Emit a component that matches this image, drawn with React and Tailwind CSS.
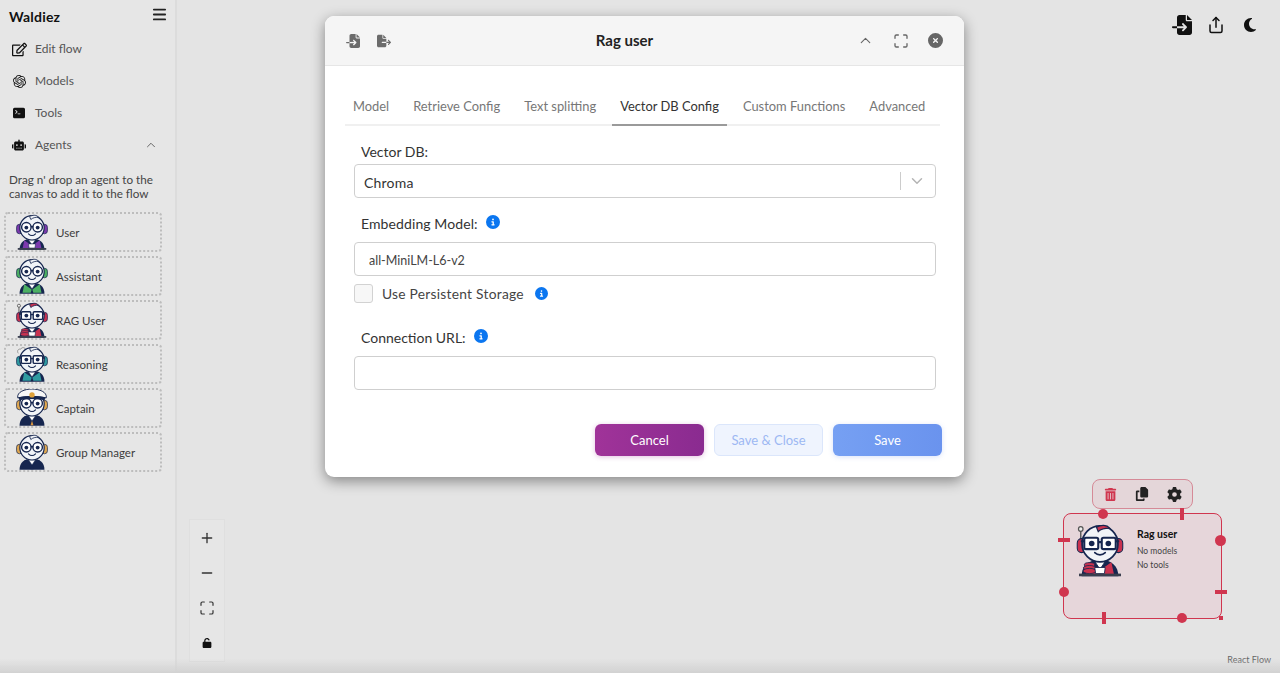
import React from "react";
import { FaRobot, FaFileImport, FaFileExport, FaMoon, FaTrashCan, FaGear, FaUnlock, FaCircleInfo, FaCircleXmark, FaCopy } from "react-icons/fa6";
import { FaRegEdit } from "react-icons/fa";
import { SiOpenai } from "react-icons/si";
import { BsTerminalFill } from "react-icons/bs";
import { FiShare } from "react-icons/fi";
import { ChevronUp, ChevronDown, Menu, Plus, Minus, Maximize } from "lucide-react";

function Robot({ accent = "#7c3aad", ear = accent, square = false, antenna = false, hat = false, steam = false, desk = false, books = false, className = "w-[34px] h-[38px] -my-[2px]" }) {
  return (
    <svg viewBox="3 0 54 64" className={className}>
      {antenna && <path d="M8 26V10" stroke="#555" strokeWidth="1.6" />}
      {antenna && <circle cx="8" cy="8" r="2.6" fill="#eee" stroke="#555" strokeWidth="1.4" />}
      {steam && <path d="M7 14c-3-4 0-8 4-7 2-4 8-3 8 1 3 1 2 6-1 7" fill="#eee" stroke="#777" strokeWidth="1.2" />}
      <path d="M9 62c0-12 8-19 21-19s21 7 21 19z" fill="#16264f" />
      <path d="M17 46l13 9 13-9 3 14H14z" fill={accent} />
      <path d="M24 45l6 9 6-9z" fill="#fff" stroke="#16264f" strokeWidth="1" />
      <path d="M30 53l-2.5 8h5z" fill={hat ? "#d9953f" : "#16264f"} />
      {books && (
        <g fill={accent} stroke="#16264f" strokeWidth="0.9">
          <ellipse cx="18" cy="49" rx="6" ry="2.6" />
          <ellipse cx="18" cy="52.5" rx="7" ry="2.8" />
          <ellipse cx="18" cy="56" rx="7.5" ry="3" />
        </g>
      )}
      {desk && <path d="M24 52h12l-1 7H25z" fill="#fff" stroke="#16264f" strokeWidth="1" />}
      {desk && <rect x="6" y="59" width="48" height="3" fill="#3a3f4f" />}
      <rect x="4" y="19" width="10" height="16" rx="5" fill={ear} stroke="#16264f" strokeWidth="1.2" />
      <rect x="46" y="19" width="10" height="16" rx="5" fill={ear} stroke="#16264f" strokeWidth="1.2" />
      <circle cx="30" cy="25" r="20.5" fill="#f1f4f8" stroke="#16264f" strokeWidth="2" />
      <path d="M26 6c5-3 12-3 15 1-5 0-10 1-13 4z" fill={books ? accent : "#f1f4f8"} stroke="#16264f" strokeWidth="1.4" />
      {square ? (
        <g fill="#fff" stroke="#16264f" strokeWidth="2.4">
          <rect x="12" y="18" width="16" height="13" rx="2" />
          <rect x="32" y="18" width="16" height="13" rx="2" />
          <path d="M28 23h4M8 22h4M48 22h4" />
        </g>
      ) : (
        <g fill="#fff" stroke="#16264f" strokeWidth="2.4">
          <circle cx="20.5" cy="24" r="8" />
          <circle cx="39.5" cy="24" r="8" />
          <path d="M28 23h4" />
        </g>
      )}
      <circle cx="20.5" cy="24.5" r="3.2" fill="#16264f" />
      <circle cx="39.5" cy="24.5" r="3.2" fill="#16264f" />
      <path d="M24 35c3.5 3.4 8.5 3.4 12 0" fill="none" stroke="#16264f" strokeWidth="1.9" strokeLinecap="round" />
      {hat && (
        <g>
          <path d="M6 15C4 5 18 0 30 0s26 5 24 15c-13-3-35-3-48 0z" fill="#f7f7f7" stroke="#16264f" strokeWidth="1.6" />
          <path d="M7 14c13-3 33-3 46 0l-2 5c-12-3-30-3-42 0z" fill="#16264f" />
          <circle cx="30" cy="10" r="4.5" fill="#e0a23a" />
        </g>
      )}
    </svg>
  );
}

const agents = [
  { name: "User", props: { accent: "#7c3aad", desk: true } },
  { name: "Assistant", props: { accent: "#4caf63" } },
  { name: "RAG User", props: { accent: "#c9324f", square: true, antenna: true, desk: true, books: true } },
  { name: "Reasoning", props: { accent: "#2e9aa0", square: true, steam: true } },
  { name: "Captain", props: { accent: "#16264f", ear: "#e0a850", hat: true } },
  { name: "Group Manager", props: { accent: "#16264f", ear: "#e0a850" } },
];

function NavItem({ icon, label, right }) {
  return (
    <div className="h-[32px] flex items-center pl-[12px] pr-[17px] text-[#555] text-[12px]">
      <span className="w-[23px] flex text-[#111]">{icon}</span>
      <span>{label}</span>
      {right && <span className="ml-auto">{right}</span>}
    </div>
  );
}

function Info({ size = "text-[14px]" }) {
  return <FaCircleInfo className={`${size} text-[#0b76f0]`} />;
}

const tabs = ["Model", "Retrieve Config", "Text splitting", "Vector DB Config", "Custom Functions", "Advanced"];

function Handle({ className }) {
  return <div className={`absolute bg-[#d0364f] ${className}`} />;
}

export default function App() {
  return (
    <div className="h-screen overflow-hidden flex bg-[#e4e4e4] font-['Lato','Noto_Sans',sans-serif]">
      <aside className="w-[177px] shrink-0 border-r-[2px] border-[#dcdcdc] bg-[#e6e6e6] flex flex-col">
        <div className="h-[33px] pl-[9px] pr-[7px] flex items-center justify-between">
          <span className="text-[14px] font-bold text-[#111] tracking-[0.2px]">Waldiez</span>
          <Menu strokeWidth={2.5} className="w-[17px] h-[17px] -mt-[4px] text-[#222]" />
        </div>
        <NavItem icon={<FaRegEdit className="text-[15px]" />} label="Edit flow" />
        <NavItem icon={<SiOpenai className="text-[13px] ml-[1px]" />} label="Models" />
        <NavItem icon={<BsTerminalFill className="text-[12px] ml-[1px]" />} label="Tools" />
        <NavItem icon={<FaRobot className="text-[14px]" />} label="Agents" right={<ChevronUp strokeWidth={1.5} className="w-[14px] h-[14px] text-[#555]" />} />
        <p className="pl-[9px] pr-[12px] mt-[11px] text-[11.7px] leading-[14px] text-[#444]">Drag n' drop an agent to the canvas to add it to the flow</p>
        <div className="mt-[12px] ml-[4px] w-[158px] flex flex-col gap-[4px]">
          {agents.map((a) => (
            <div key={a.name} className="h-[40px] rounded-[4px] border-[2px] border-dotted border-[#bdbdbd] flex items-center pl-[9px] gap-[7px] text-[11.5px] text-[#3d3d3d]">
              <Robot {...a.props} />
              <span className="pt-[2px]">{a.name}</span>
            </div>
          ))}
        </div>
      </aside>

      <main className="flex-1 relative">
        <div className="flex justify-end items-center pt-[15px] pr-[22px] text-[#111]">
          <FaFileImport className="text-[20px]" />
          <FiShare className="text-[18px] ml-[15px]" />
          <FaMoon className="text-[16px] ml-[17px]" />
        </div>

        {/* Modal */}
        <div className="absolute left-[148px] top-[16px] w-[639px] h-[461px] rounded-[9px] bg-white flex flex-col overflow-hidden shadow-[0_4px_14px_rgba(0,0,0,0.42)]">
          <header className="h-[50px] shrink-0 bg-[#f5f5f5] border-b border-[#e6e6e6] flex items-center pl-[21px] pr-[21px] relative">
            <div className="flex items-center gap-[17px] text-[#6b6b6b]">
              <FaFileImport className="text-[14px]" />
              <FaFileExport className="text-[14px]" />
            </div>
            <h1 className="absolute left-0 right-0 text-center text-[15px] font-bold text-[#222] pr-[40px]">Rag user</h1>
            <div className="ml-auto flex items-center gap-[19px] text-[#666]">
              <ChevronUp strokeWidth={1.6} className="w-[17px] h-[17px]" />
              <Maximize className="w-[16px] h-[16px]" />
              <FaCircleXmark className="text-[15px] text-[#666]" />
            </div>
          </header>

          <div className="mt-[27px] ml-[20px] mr-[24px] flex gap-[8px] border-b-[2px] border-[#f0f0f0] h-[33px]">
            {tabs.map((t) => {
              const active = t === "Vector DB Config";
              return (
                <div key={t} className={`px-[8px] h-[33px] flex items-start pt-[4px] text-[12.9px] whitespace-nowrap ${active ? "border-b-[2px] border-[#9a9a9a] text-[#333]" : "text-[#777]"}`}>
                  {t}
                </div>
              );
            })}
          </div>

          <div className="pl-[29px] pr-[28px] flex flex-col text-[#333]">
            <label className="pl-[7px] mt-[17px] text-[14px] leading-[18px]">Vector DB:</label>
            <div className="mt-[3px] h-[34px] border border-[#cfcfcf] rounded-[4px] flex items-center pl-[9px] text-[14px] tracking-[0.2px]">
              <span className="pt-[2px]">Chroma</span>
              <span className="ml-auto w-px h-[18px] bg-[#cccccc]" />
              <ChevronDown className="w-[18px] h-[18px] ml-[7px] mr-[9px] text-[#b5b5b5]" />
            </div>
            <div className="pl-[7px] mt-[15px] h-[20px] flex items-center gap-[8px] text-[14px] tracking-[0.1px]">
              <span>Embedding Model:</span>
              <span className="-mt-[3px]"><Info /></span>
            </div>
            <input readOnly value="all-MiniLM-L6-v2" className="mt-[9px] h-[34px] border border-[#cfcfcf] rounded-[4px] pl-[14px] pt-[2px] text-[12.5px] text-[#444] outline-none" />
            <div className="mt-[8px] h-[19px] flex items-center text-[13.8px] tracking-[0.25px]">
              <span className="w-[19px] h-[19px] border border-[#d2d2d2] rounded-[3px] bg-[#f7f7f7]" />
              <span className="ml-[9px] pt-[2px] text-[#444]">Use Persistent Storage</span>
              <span className="ml-[11px]"><Info size="text-[13px]" /></span>
            </div>
            <div className="pl-[7px] mt-[24px] h-[20px] flex items-center gap-[8px] text-[14px]">
              <span>Connection URL:</span>
              <span className="-mt-[3px]"><Info /></span>
            </div>
            <input readOnly className="mt-[9px] h-[34px] border border-[#cfcfcf] rounded-[4px] outline-none" />
          </div>

          <div className="mt-[34px] pr-[22px] flex justify-end gap-[10px] text-[13px]">
            <button className="w-[109px] h-[32px] pt-[2px] rounded-[6px] bg-gradient-to-r from-[#a03399] to-[#8a2b90] text-white shadow-[0_1px_5px_rgba(160,50,150,0.3)]">Cancel</button>
            <button className="w-[109px] h-[32px] pt-[2px] rounded-[6px] bg-[#eff4fe] border border-[#dbe6fb] text-[#9db8f3]">Save &amp; Close</button>
            <button className="w-[109px] h-[32px] pt-[2px] rounded-[6px] bg-gradient-to-r from-[#76a0f3] to-[#6a93ee] text-white shadow-[0_1px_5px_rgba(100,140,240,0.25)]">Save</button>
          </div>
        </div>

        {/* Zoom controls */}
        <div className="absolute left-[12px] top-[519px] w-[36px] h-[143px] bg-[#e6e6e6] border border-[#dfdfdf] grid grid-rows-4 items-center justify-items-center text-[#333]">
          <Plus className="w-[16px] h-[16px]" />
          <Minus className="w-[16px] h-[16px]" />
          <Maximize strokeWidth={1.8} className="w-[16px] h-[16px]" />
          <FaUnlock className="text-[10px] text-[#111]" />
        </div>

        {/* Flow node toolbar */}
        <div className="absolute left-[915px] top-[479px] w-[101px] h-[30px] rounded-[8px] border border-[#d58a97] bg-[#e4d6d9] flex items-center justify-center gap-[18px]">
          <FaTrashCan className="text-[13px] text-[#d0364f]" />
          <FaCopy className="text-[14px] text-[#222]" />
          <FaGear className="text-[15px] text-[#222]" />
        </div>

        {/* Flow node */}
        <div className="absolute left-[886px] top-[513px] w-[159px] h-[106px] rounded-[8px] border border-[#d0364f] bg-[#e6d6da]">
          <div className="flex pl-[11px] pt-[8px]">
            <Robot accent="#c9324f" square antenna desk books className="w-[50px] h-[56px]" />
            <div className="ml-[12px] mt-[5px] flex flex-col">
              <span className="text-[10.5px] font-bold text-[#111] leading-[14px]">Rag user</span>
              <span className="mt-[4px] text-[8.5px] text-[#444] leading-[12px]">No models</span>
              <span className="mt-[2px] text-[8.5px] text-[#444] leading-[12px]">No tools</span>
            </div>
          </div>
          <Handle className="w-[10px] h-[10px] rounded-full left-[34px] -top-[5px]" />
          <Handle className="w-[4px] h-[12px] left-[116px] -top-[6px]" />
          <Handle className="w-[12px] h-[4px] -left-[6px] top-[24px]" />
          <Handle className="w-[11px] h-[11px] rounded-full -right-[5px] top-[21px]" />
          <Handle className="w-[10px] h-[10px] rounded-full -left-[5px] top-[73px]" />
          <Handle className="w-[12px] h-[4px] -right-[6px] top-[76px]" />
          <Handle className="w-[4px] h-[12px] left-[38px] -bottom-[6px]" />
          <Handle className="w-[10px] h-[10px] rounded-full left-[113px] -bottom-[5px]" />
          <Handle className="w-[4px] h-[4px] -right-[2px] -bottom-[2px]" />
        </div>

        <span className="absolute right-[9px] bottom-[7px] text-[9px] text-[#666]">React Flow</span>
      </main>
      <div className="fixed inset-x-0 bottom-0 h-[14px] bg-gradient-to-b from-transparent to-[#d2d2d2] pointer-events-none" />
    </div>
  );
}
